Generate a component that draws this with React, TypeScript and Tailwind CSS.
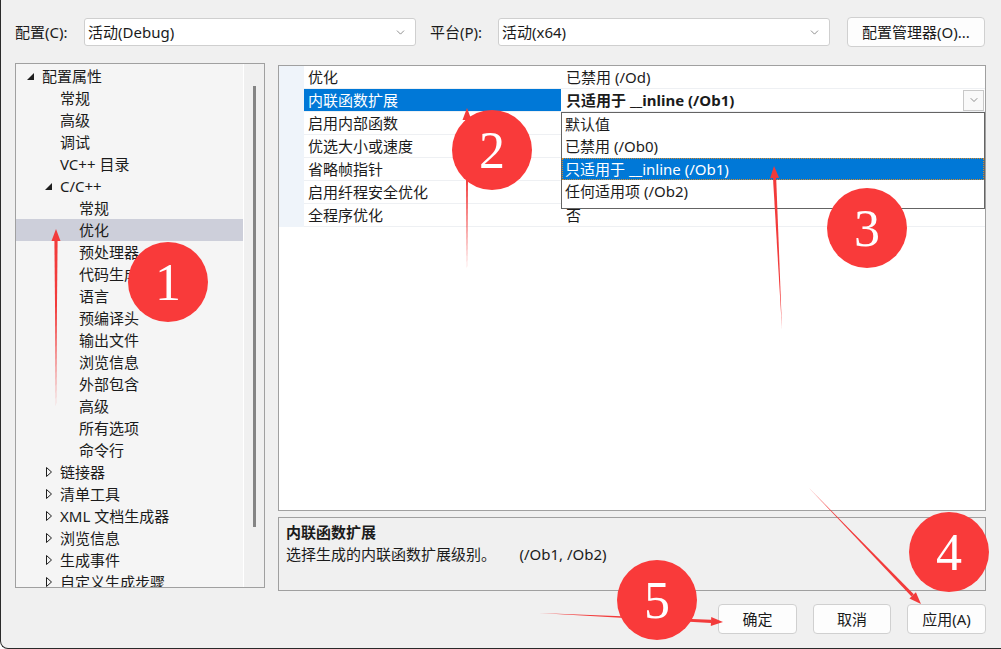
import { ChevronDown } from "lucide-react";

type TreeItem = { label: string; level: number; state?: "open" | "closed"; selected?: boolean };

const tree: TreeItem[] = [
  { label: "配置属性", level: 0, state: "open" },
  { label: "常规", level: 1 },
  { label: "高级", level: 1 },
  { label: "调试", level: 1 },
  { label: "VC++ 目录", level: 1 },
  { label: "C/C++", level: 1, state: "open" },
  { label: "常规", level: 2 },
  { label: "优化", level: 2, selected: true },
  { label: "预处理器", level: 2 },
  { label: "代码生成", level: 2 },
  { label: "语言", level: 2 },
  { label: "预编译头", level: 2 },
  { label: "输出文件", level: 2 },
  { label: "浏览信息", level: 2 },
  { label: "外部包含", level: 2 },
  { label: "高级", level: 2 },
  { label: "所有选项", level: 2 },
  { label: "命令行", level: 2 },
  { label: "链接器", level: 1, state: "closed" },
  { label: "清单工具", level: 1, state: "closed" },
  { label: "XML 文档生成器", level: 1, state: "closed" },
  { label: "浏览信息", level: 1, state: "closed" },
  { label: "生成事件", level: 1, state: "closed" },
  { label: "自定义生成步骤", level: 1, state: "closed" },
];

const props = [
  { name: "优化", value: "已禁用 (/Od)" },
  { name: "内联函数扩展", value: "只适用于 __inline (/Ob1)", selected: true },
  { name: "启用内部函数", value: "" },
  { name: "优选大小或速度", value: "" },
  { name: "省略帧指针", value: "" },
  { name: "启用纤程安全优化", value: "" },
  { name: "全程序优化", value: "否" },
];

const options = ["默认值", "已禁用 (/Ob0)", "只适用于 __inline (/Ob1)", "任何适用项 (/Ob2)"];

const indent = ["pl-[26px]", "pl-[44px]", "pl-[63px]"];

function Expander({ state }: { state?: "open" | "closed" }) {
  if (state === "open")
    return (
      <svg width="16" height="22" viewBox="0 0 16 22" className="shrink-0">
        <polygon points="8,8 8,15 1,15" fill="#1e1e1e" />
      </svg>
    );
  if (state === "closed")
    return (
      <svg width="16" height="22" viewBox="0 0 16 22" className="shrink-0">
        <polygon points="2.5,6.5 7.5,11 2.5,15.5" fill="none" stroke="#1e1e1e" strokeWidth="1" />
      </svg>
    );
  return <span className="w-[16px] shrink-0" />;
}

function Combo({ text, width }: { text: string; width: string }) {
  return (
    <div className={`${width} h-[28px] bg-white border border-[#cfcfcf] rounded-[3px] flex items-center pl-[3px] pr-[8px]`}>
      <span className="flex-1 text-[15px] text-[#1b1b1b]">{text}</span>
      <ChevronDown size={13} strokeWidth={1.2} className="text-[#555]" />
    </div>
  );
}

function Btn({ label, width }: { label: string; width: string }) {
  return (
    <div className={`${width} h-[30px] bg-[#fdfdfd] border border-[#d0d0d0] rounded-[4px] flex items-center justify-center text-[15px] text-[#1b1b1b]`}>
      {label}
    </div>
  );
}

// red marker line that widens toward its arrow head
function Arrow({ x1, y1, x2, y2 }: { x1: number; y1: number; x2: number; y2: number }) {
  const dx = x2 - x1;
  const dy = y2 - y1;
  const len = Math.hypot(dx, dy);
  const ux = dx / len;
  const uy = dy / len;
  const nx = -uy;
  const ny = ux;
  const headLen = 12;
  const bx = x2 - ux * headLen;
  const by = y2 - uy * headLen;
  const shaft = [
    [x1, y1],
    [bx + nx * 1.6, by + ny * 1.6],
    [bx - nx * 1.6, by - ny * 1.6],
  ];
  const head = [
    [x2, y2],
    [bx + nx * 4.5, by + ny * 4.5],
    [bx - nx * 4.5, by - ny * 4.5],
  ];
  const pts = (p: number[][]) => p.map((q) => q.join(",")).join(" ");
  return (
    <g fill="#f23b3b">
      <polygon points={pts(shaft)} />
      <polygon points={pts(head)} />
    </g>
  );
}

function Marker({ cx, cy, n }: { cx: number; cy: number; n: number }) {
  return (
    <g>
      <circle cx={cx} cy={cy} r={40} fill="#f93a3a" />
      <text
        x={cx}
        y={cy + 18}
        textAnchor="middle"
        fill="#fff"
        fontSize="52"
        fontFamily="'Liberation Serif', serif"
      >
        {n}
      </text>
    </g>
  );
}

export default function App() {
  return (
    <div className="relative w-[1001px] h-[649px] overflow-hidden bg-[#f0f0f0] border-l border-b border-[#2a2a2a] rounded-bl-[8px] font-['Noto_Sans','Noto_Sans_CJK_SC',sans-serif] text-[#1b1b1b] leading-[22px]">
      {/* configuration / platform bar */}
      <div className="flex items-center h-[30px] mt-[17px] pl-[14px]">
        <span className="w-[69px] text-[15px]">配置(C):</span>
        <Combo text="活动(Debug)" width="w-[332px]" />
        <span className="ml-[14px] w-[68px] text-[15px]">平台(P):</span>
        <Combo text="活动(x64)" width="w-[332px]" />
        <div className="ml-[17px]">
          <Btn label="配置管理器(O)..." width="w-[138px]" />
        </div>
      </div>

      <div className="flex mt-[16px] pl-[14px]">
        {/* property page tree */}
        <div className="w-[250px] h-[525px] border border-[#a0a0a0] bg-[#f5f5f5] flex overflow-hidden">
          <div className="flex-1 pt-[1px] border-r border-white">
            {tree.map((item, i) => (
              <div
                key={i}
                className={`flex items-center h-[22px] text-[15px] ${item.selected ? "bg-[#cdcfda]" : ""} ${
                  item.state ? (item.level === 0 ? "pl-[10px]" : "pl-[28px]") : indent[item.level]
                }`}
              >
                {item.state && <Expander state={item.state} />}
                <span className="whitespace-nowrap">{item.label}</span>
              </div>
            ))}
          </div>
          <div className="w-[20px] bg-[#f0f0f0] pt-[22px] flex justify-center">
            <div className="w-[3px] h-[441px] bg-[#858585]" />
          </div>
        </div>

        <div className="ml-[13px] w-[708px] pt-[2px] flex flex-col">
          {/* property grid */}
          <div className="relative h-[446px] border border-[#a0a0a0] bg-white">
            <div className="flex flex-col">
              {props.map((p, i) => (
                <div key={i} className="flex h-[23px] text-[15px]">
                  <div className="w-[25px] bg-[#eff4fa]" />
                  <div className="flex flex-1 border-b border-[#eef0f3]">
                    <div className={`w-[257px] pl-[4px] h-[22px] ${p.selected ? "bg-[#0078d7] text-white" : ""}`}>{p.name}</div>
                    <div className={`flex-1 flex items-center pl-[5px] pr-[1px] h-[22px] ${p.selected ? "font-bold" : ""}`}>
                      <span className="flex-1">{p.value}</span>
                      {p.selected && (
                        <div className="w-[21px] h-[21px] border border-[#c8c8c8] bg-[#f9f9f9] flex items-center justify-center">
                          <ChevronDown size={12} strokeWidth={1.3} className="text-[#555]" />
                        </div>
                      )}
                    </div>
                  </div>
                </div>
              ))}
            </div>

            {/* open drop-down list */}
            <div className="absolute left-[282px] top-[46px] w-[424px] h-[97px] bg-white border border-[#646464] text-[15px]">
              {options.map((o, i) => (
                <div
                  key={i}
                  className={`h-[22px] pl-[3px] ${i === 2 ? "bg-[#0078d7] text-white outline-1 outline-dotted outline-[#d48a2a] -outline-offset-1 mt-[1px]" : ""}`}
                >
                  {o}
                </div>
              ))}
            </div>
          </div>

          {/* description */}
          <div className="mt-[6px] h-[74px] border border-[#a0a0a0] bg-[#f0f0f0] px-[7px] pt-[3px] text-[15px]">
            <div className="font-bold">内联函数扩展</div>
            <div className="whitespace-pre">选择生成的内联函数扩展级别。      (/Ob1, /Ob2)</div>
          </div>
        </div>
      </div>

      {/* dialog buttons */}
      <div className="flex justify-end gap-[16px] mt-[13px] pr-[15px]">
        <Btn label="确定" width="w-[79px]" />
        <Btn label="取消" width="w-[78px]" />
        <Btn label="应用(A)" width="w-[79px]" />
      </div>

      {/* numbered call-outs */}
      <svg className="absolute inset-0 pointer-events-none" width="1001" height="649">
        <Arrow x1={55} y1={408} x2={55} y2={229} />
        <Arrow x1={466} y1={270} x2={466} y2={108} />
        <Arrow x1={781} y1={330} x2={773} y2={166} />
        <Arrow x1={808} y1={488} x2={920} y2={604} />
        <Arrow x1={538} y1={613} x2={722} y2={622} />
        <Marker cx={167} cy={282} n={1} />
        <Marker cx={491} cy={150} n={2} />
        <Marker cx={866} cy={228} n={3} />
        <Marker cx={948} cy={552} n={4} />
        <Marker cx={656} cy={600} n={5} />
      </svg>
    </div>
  );
}
